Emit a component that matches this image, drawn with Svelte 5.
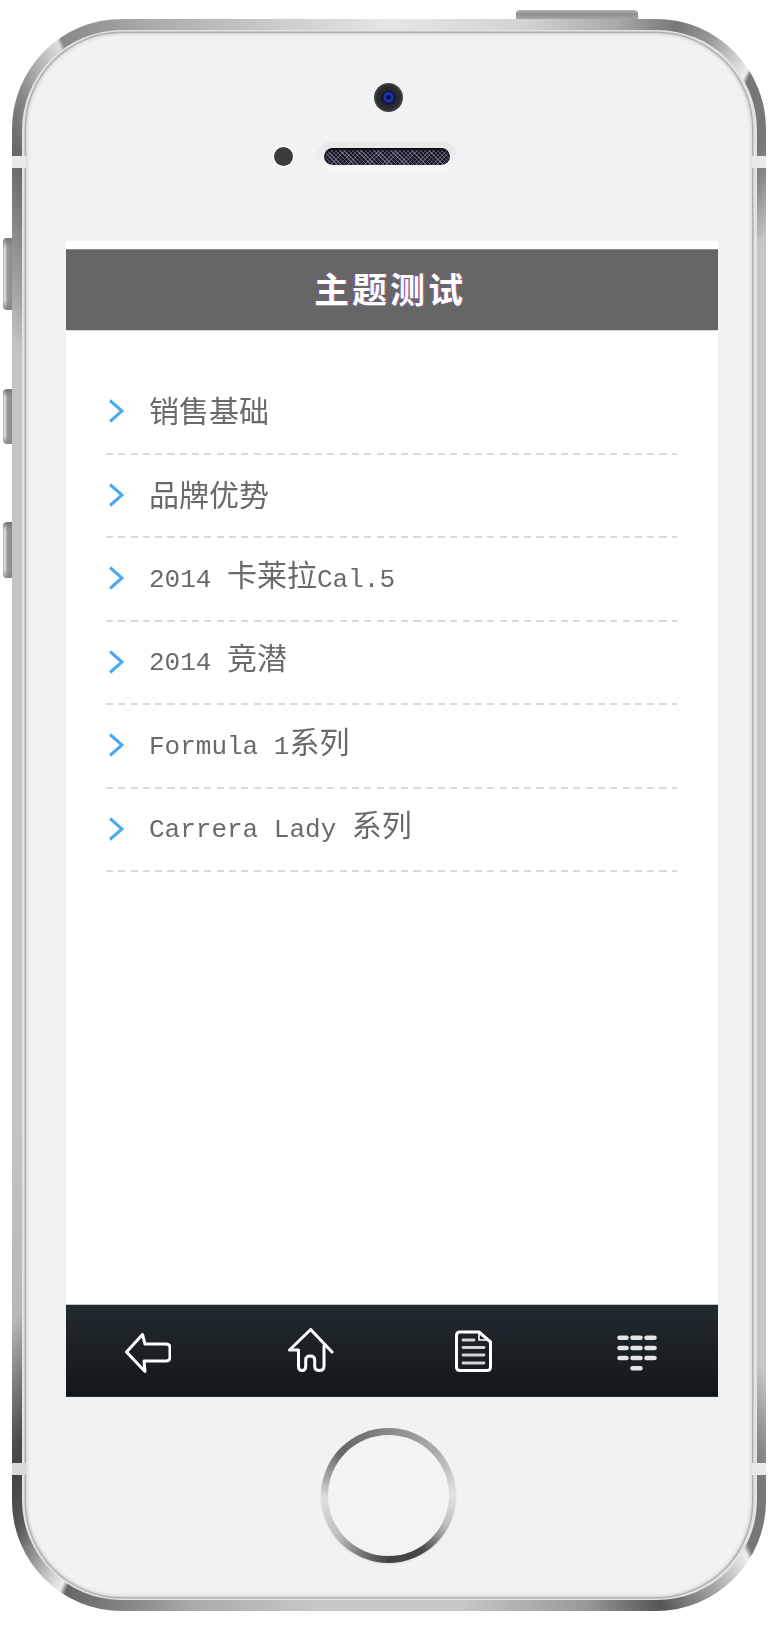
<script lang="ts">
  const title = '主题测试';
  const items = [
    '销售基础',
    '品牌优势',
    '2014 卡莱拉Cal.5',
    '2014 竞潜',
    'Formula 1系列',
    'Carrera Lady 系列'
  ];

  // latin runs are set smaller so they keep the half-width look of the CJK text
  function runs(text: string) {
    return text
      .split(/([\u4e00-\u9fff]+)/)
      .filter(Boolean)
      .map(t => ({ text: t, cjk: /[\u4e00-\u9fff]/.test(t) }));
  }
</script>

<div class="page">
  <div class="phone">
    <span class="power"></span>
    <span class="side side--mute"></span>
    <span class="side side--up"></span>
    <span class="side side--down"></span>
    <span class="band band--tl"></span>
    <span class="band band--tr"></span>
    <span class="band band--bl"></span>
    <span class="band band--br"></span>

    <div class="rim">
      <div class="face">
        <div class="sensors">
          <div class="camera"></div>
          <div class="ear-row">
            <div class="dot"></div>
            <div class="speaker"><div class="grille"></div></div>
          </div>
        </div>

        <div class="screen">
          <h1 class="title">{title}</h1>

          <ul class="list">
            {#each items as item}
              <li class="row">
                <svg class="chev" viewBox="0 0 16 24" width="16" height="24">
                  <polyline points="2,1.5 14,12 2,22.5" />
                </svg>
                <span class="label">
                  {#each runs(item) as run}
                    <span class:latin={!run.cjk}>{run.text}</span>
                  {/each}
                </span>
              </li>
            {/each}
          </ul>

          <nav class="nav">
            <div class="nav-cell nav-cell--low">
              <svg viewBox="0 0 46 40" width="46" height="40">
                <path d="M1.5 19 L17.5 1.5 L20 11 H41 Q45 11 45 15 V24 Q45 28 41 28 H19 L20 38.5 Z" />
              </svg>
            </div>
            <div class="nav-cell">
              <svg viewBox="0 0 46 45" width="46" height="45">
                <path d="M10.5 22 H1.5 L22.7 1.5 L44 24 M36 18 V38 Q36 42.5 31.5 42.5 Q26.7 42.5 26.7 38 V32 Q26.7 28 22.2 28 Q17.7 28 17.7 32 V38 Q17.7 42.5 14 42.5 Q10.5 42.5 10.5 38 V22" />
              </svg>
            </div>
            <div class="nav-cell">
              <svg viewBox="0 0 37 42" width="37" height="42">
                <path d="M5 2 H24 L35.5 12 V37 Q35.5 40.5 32 40.5 H5 Q1.5 40.5 1.5 37 V5.5 Q1.5 2 5 2 Z" />
                <path class="thin" d="M24 3 V10 H34" />
                <path class="lines" d="M8 10 H19 M8 17.5 H29 M8 25 H29 M8 33 H29" />
              </svg>
            </div>
            <div class="nav-cell nav-cell--low">
              <svg viewBox="0 0 40 36" width="40" height="36">
                <path class="keys" d="M2.5 2.7 H9.5 M15.5 2.7 H23.5 M29.5 2.7 H37.5 M2.5 13 H9.5 M15.5 13 H23.5 M29.5 13 H37.5 M2.5 23 H9.5 M15.5 23 H23.5 M29.5 23 H37.5 M15.5 33.3 H23.5" />
              </svg>
            </div>
          </nav>
        </div>

        <div class="home-zone">
          <div class="home"><div class="home-in"></div></div>
        </div>
      </div>
    </div>
  </div>
</div>

<style>
  :global(body) { margin: 0; background: #fff; }

  .page {
    width: 770px; height: 1650px;
    padding: 19px 0 0 12px;
    box-sizing: border-box;
    background: #fff;
  }

  .phone {
    position: relative;
    width: 754px; height: 1592px;
    padding: 11px 9.5px;
    box-sizing: border-box;
    border-radius: 110px;
    background: conic-gradient(
      #e6e6e6 0deg, #d2d2d2 10deg, #aaa 16deg, #777 20deg, #999 22.5deg, #ccc 24.5deg, #eee 25.7deg,
      #777 26deg, #777 29deg, #888 30.3deg, #c6c6c6 33deg, #c6c6c6 146deg, #888 149.6deg,
      #777 151deg, #777 153.8deg, #eee 154.2deg, #aaa 157deg, #555 161deg, #999 166deg, #c8c8c8 175deg,
      #c8c8c8 185deg, #aaa 194deg, #888 198deg, #666 202.6deg, #eee 203deg, #aaa 205deg, #555 207.5deg,
      #444 209.5deg, #4a4a4a 210.5deg, #b8b8b8 216.5deg, #c4c4c4 230deg, #c4c4c4 321.5deg, #aaa 324deg,
      #888 327.6deg, #666 330.5deg, #888 333deg, #ddd 336.8deg, #888 337.1deg, #aaa 343deg, #ccc 352deg, #e6e6e6 360deg
    );
  }

  /* hardware that sits on the metal edge */
  .power {
    position: absolute; left: 504px; top: -9px;
    width: 122px; height: 9px;
    border-radius: 4px 4px 0 0;
    background: linear-gradient(#b4b4b4, #8e8e8e 45%, #a6a6a6);
  }
  .side {
    position: absolute; left: -9px;
    width: 9px;
    border-radius: 4px 0 0 4px;
    background:
      linear-gradient(#777, transparent 14%, transparent 86%, #888),
      linear-gradient(90deg, #bbb, #e0e0e0 25%, #999 45%, #8c8c8c);
  }
  .side--mute { top: 219px; height: 72px; }
  .side--up   { top: 370px; height: 55px; }
  .side--down { top: 503px; height: 56px; }

  .band { position: absolute; width: 14px; height: 12px; background: #e9e9e9; }
  .band--tl { left: 0; top: 137px; }
  .band--tr { right: 0; top: 137px; }
  .band--bl { left: 0; top: 1444px; background: #d9d9d9; }
  .band--br { right: 0; top: 1444px; }

  .rim {
    height: 100%;
    box-sizing: border-box;
    padding: 3px 4.5px;
    border-radius: 100px;
    background: #e2e2e2;
  }

  .face {
    height: 100%;
    display: flex; flex-direction: column;
    border-radius: 96px;
    background: #f1f2f4;
    box-shadow: 0 0 0 1.5px #b0b0b0, inset 0 0 4px rgba(0,0,0,0.22);
  }

  .sensors {
    height: 208px;
    box-sizing: border-box;
    padding-top: 50px;
    display: flex; flex-direction: column; align-items: center;
  }

  .camera {
    margin-right: 2px;
    width: 29px; height: 29px;
    border-radius: 50%;
    background: radial-gradient(circle at 50% 50%, #0b0f40 0 2px, #1e36c4 3px 4px, #10163a 6px, #26282b 8px, #2e2f31 12px, #4a4b4d 14.5px);
  }

  .ear-row {
    margin-top: 30px;
    padding-right: 4px;
    align-self: stretch;
    display: grid;
    grid-template-columns: 1fr 140px 1fr;
    align-items: center;
  }

  .dot {
    justify-self: end;
    margin-right: 24px;
    width: 19px; height: 19px;
    border-radius: 50%;
    background: #3b3b3d;
    box-shadow: 0 0 0 1px #fff;
  }

  .speaker {
    height: 29px;
    box-sizing: border-box;
    padding: 6px 7px;
    border-radius: 15px;
    background: linear-gradient(#e6e6e9, #f7f7f9);
    box-shadow: 0 0 0 1px #f0f0f2;
  }

  .grille {
    height: 17px;
    border-radius: 9px;
    background-color: #15151f;
    background-image:
      repeating-linear-gradient(45deg, rgba(150,150,170,0.55) 0 1px, transparent 1px 3px),
      repeating-linear-gradient(-45deg, rgba(150,150,170,0.4) 0 1px, transparent 1px 3px);
    box-shadow: inset 0 2px 2px #08080c;
  }

  .screen {
    margin-left: 40px;
    width: 652px; height: 1156px;
    padding-top: 8px;
    box-sizing: border-box;
    display: flex; flex-direction: column;
    background: #fff;
  }

  .title {
    margin: 0;
    height: 82px;
    padding-right: 4px;
    box-sizing: border-box;
    border-top: 1px solid #8c8c8c;
    border-bottom: 1px solid #d8d8d8;
    background: #666;
    color: #fff;
    font-family: "Noto Sans CJK SC", sans-serif;
    font-size: 35px; font-weight: 700;
    letter-spacing: 3px;
    line-height: 76px;
    text-align: center;
    text-shadow: -1px 0 rgba(70,70,255,0.55), 1px 0 rgba(255,90,90,0.45);
  }

  .list {
    flex: 1;
    margin: 0;
    padding: 40px 41px 0 40px;
    list-style: none;
  }

  .row {
    height: 83.5px;
    box-sizing: border-box;
    padding: 0 0 3px 2px;
    display: flex; align-items: center; gap: 25px;
    background: repeating-linear-gradient(90deg, #d9d9d9 0 7px, transparent 7px 12.3px) left bottom / 100% 2px no-repeat;
  }

  .chev { flex-shrink: 0; }
  .chev polyline { fill: none; stroke: #4aa9ef; stroke-width: 3; }

  .label {
    margin-bottom: 4px;
    color: #6a6a6a;
    font-family: "Noto Sans CJK SC", sans-serif;
    font-size: 30px;
    line-height: 40px;
    white-space: pre;
    filter: blur(0.4px);
  }
  .latin {
    font-family: "Liberation Mono", "Noto Sans CJK SC", monospace;
    font-size: 26px;
    vertical-align: -1px;
  }

  .nav {
    height: 93px;
    box-sizing: border-box;
    border-top: 1px solid #c4c4c4;
    border-bottom: 1px solid #2a2f33;
    display: grid;
    grid-template-columns: repeat(4, 1fr);
    background: linear-gradient(#222b30, #12161a);
  }

  .nav-cell {
    display: flex; align-items: center; justify-content: center;
  }
  .nav-cell--low { padding-top: 5px; }
  .nav svg { display: block; filter: blur(0.5px); }
  .nav path { fill: none; stroke: #fff; stroke-width: 3; stroke-linecap: round; stroke-linejoin: round; }
  .nav path.thin { stroke-width: 1.6; }
  .nav path.lines { stroke: #d4d4d4; stroke-width: 2.8; }
  .nav path.keys { stroke: #e4e4e4; stroke-width: 4.6; }

  .home-zone {
    flex: 1;
    padding: 31px 1px 0 0;
    display: flex; justify-content: center;
  }

  .home {
    width: 135px; height: 135px;
    box-sizing: border-box;
    padding: 7px;
    border-radius: 50%;
    background: conic-gradient(#8a8a8a 0deg, #aaa 45deg, #e2e2e2 90deg, #bbb 118deg, #444 150deg, #444 180deg, #777 205deg, #bbb 230deg, #e0e0e0 268deg, #aaa 285deg, #666 312deg, #777 340deg, #8a8a8a 360deg);
    box-shadow: 0 1px 2px rgba(0,0,0,0.1);
  }

  .home-in {
    width: 100%; height: 100%;
    border-radius: 50%;
    background: #f2f3f5;
  }
</style>
